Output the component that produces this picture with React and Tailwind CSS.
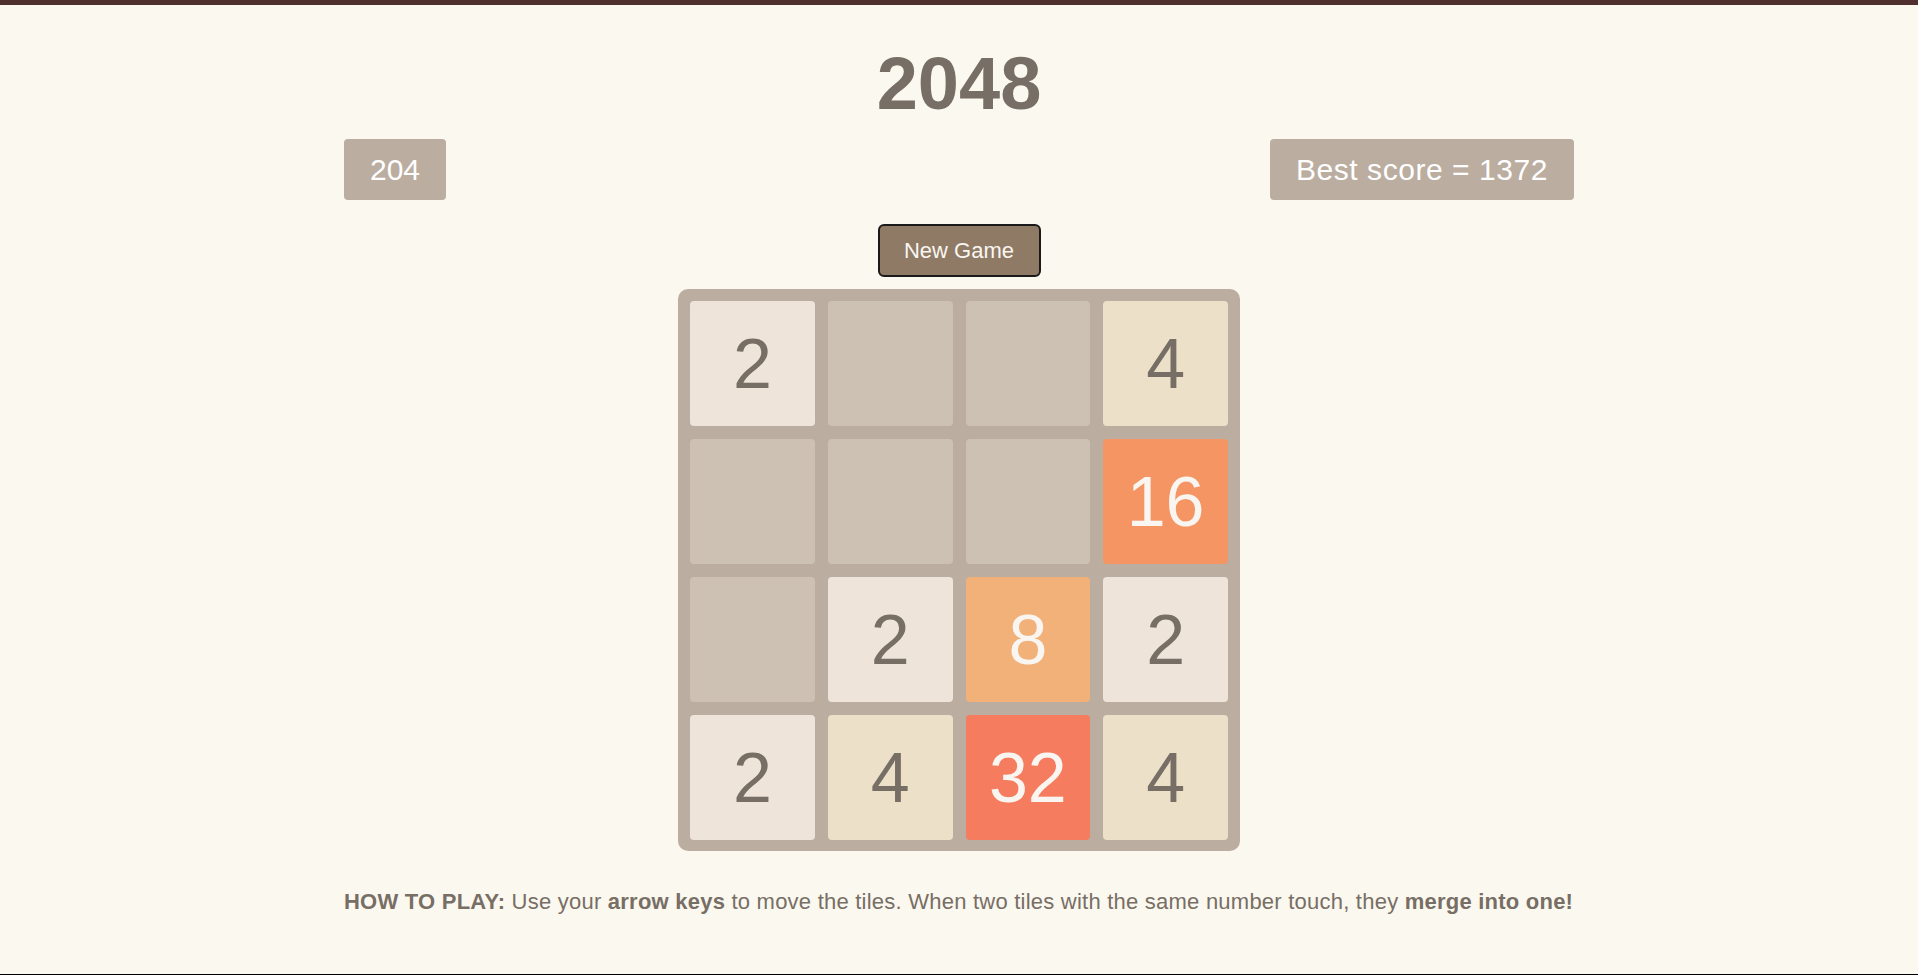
// 2048 game board with score bar and help text

const TILE_STYLES = {
  0: 'bg-[#cdc1b4]',
  2: 'bg-[#eee4da] text-[#776e65]',
  4: 'bg-[#ede0c8] text-[#776e65]',
  8: 'bg-[#f2b179] text-[#f9f6f2]',
  16: 'bg-[#f59563] text-[#f9f6f2]',
  32: 'bg-[#f67c5f] text-[#f9f6f2]',
};

const BOARD = [
  [2, 0, 0, 4],
  [0, 0, 0, 16],
  [0, 2, 8, 2],
  [2, 4, 32, 4],
];

function Tile({ value }) {
  return (
    <div
      className={`h-[125px] rounded-[4px] flex items-center justify-center text-[70px] leading-none ${TILE_STYLES[value]}`}
    >
      {value ? value : ''}
    </div>
  );
}

function ScoreBox({ className = '', children }) {
  return (
    <div
      className={`h-[61px] px-[26px] rounded-[4px] bg-[#bbada0] text-white text-[30px] flex items-center ${className}`}
    >
      {children}
    </div>
  );
}

export default function App() {
  return (
    <div
      className="h-[975px] bg-[#fbf8ef] border-t-[5px] border-t-[#4f302f] border-b border-b-black flex flex-col items-center text-[#776e65]"
      style={{ fontFamily: '"Liberation Sans", Arial, sans-serif' }}
    >
      {/* 제목 */}
      <h1 className="mt-[42px] text-[74px] leading-none font-bold">2048</h1>

      {/* 점수 */}
      <div className="mt-[18px] w-[1230px] flex justify-between">
        <ScoreBox>204</ScoreBox>
        <ScoreBox className="tracking-[0.55px]">Best score = 1372</ScoreBox>
      </div>

      <button className="mt-[24px] w-[163px] h-[53px] rounded-[6px] border-2 border-[#1a1a1a] bg-[#8f7a66] text-[#f9f6f2] text-[22px] flex items-center justify-center">
        New Game
      </button>

      {/* 보드 */}
      <div className="mt-[12px] w-[562px] h-[562px] p-[12px] rounded-[10px] bg-[#bbada0] grid grid-cols-4 gap-[13px]">
        {BOARD.flat().map((v, i) => (
          <Tile key={i} value={v} />
        ))}
      </div>

      {/* 설명 */}
      <p className="mt-[34px] w-[1230px] text-[22px] tracking-[0.23px] whitespace-nowrap">
        <b>HOW TO PLAY:</b> Use your <b>arrow keys</b> to move the tiles. When two tiles with the same
        number touch, they <b>merge into one!</b>
      </p>
    </div>
  );
}
